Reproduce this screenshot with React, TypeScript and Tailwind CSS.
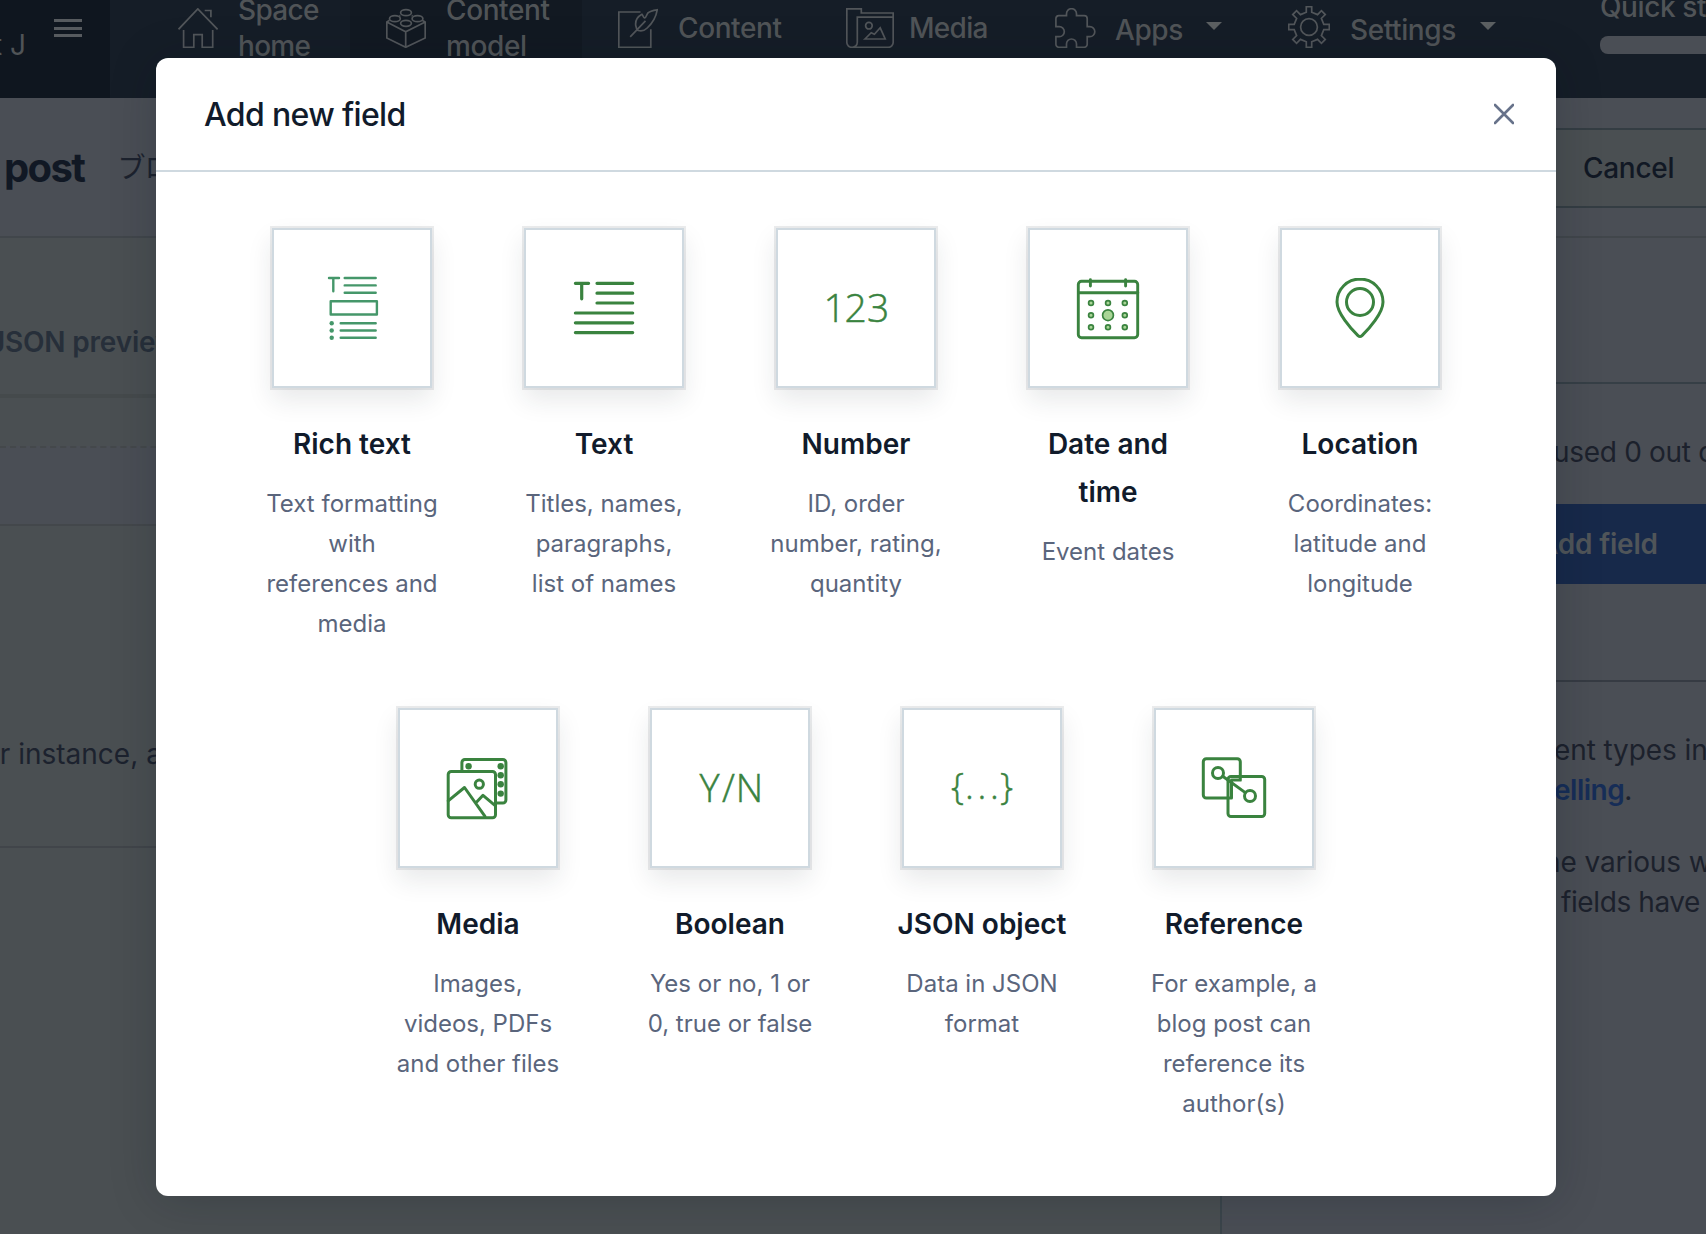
import type { ReactNode } from "react";

const GREEN = "#3a833f";

// 8-tooth cog outline, centred in a 42x42 box
const gearPath = (() => {
  const pt = (x: number, y: number, a: number) =>
    `${(21 + x * Math.cos(a) - y * Math.sin(a)).toFixed(2)} ${(21 + x * Math.sin(a) + y * Math.cos(a)).toFixed(2)}`;
  const parts: string[] = [];
  for (let i = 0; i < 8; i++) {
    const a = (i * Math.PI) / 4;
    parts.push(pt(-2.7, -14.8, a), pt(-2.7, -20.3, a), pt(2.7, -20.3, a), pt(2.7, -14.8, a));
  }
  return `M${parts.join("L")}Z`;
})();

const NavSvg = ({ w = 40, h = 40, children }: { w?: number; h?: number; children: ReactNode }) => (
  <svg width={w} height={h} viewBox={`0 0 ${w} ${h}`} fill="none" stroke="#52565a" strokeWidth={1.7} className="shrink-0">
    {children}
  </svg>
);

const HomeIcon = () => (
  <NavSvg>
    <path d="M.5 21.3 19.8.9 39.6 21.3M26.7 2.5h6.2v6.8M5.6 22v17.3h10.2V26.7h8.4v12.6h10.5V22" />
  </NavSvg>
);

const ModelIcon = () => (
  <NavSvg>
    <ellipse cx="20" cy="4.7" rx="5.4" ry="3" />
    <ellipse cx="8.9" cy="10.7" rx="5.4" ry="3" />
    <ellipse cx="31.5" cy="10.7" rx="5.4" ry="3" />
    <ellipse cx="20" cy="15.3" rx="5.4" ry="3" />
    <path d="M3.5 12.3.8 14v16l18.9 9.3L39.2 30V14l-3-1.7M.8 14l18.9 9.7L39.2 14M19.7 23.7v15.6M14.3 7.5l-.8.5M25.7 7.5l.8.5" />
  </NavSvg>
);

const ContentIcon = () => (
  <NavSvg>
    <path d="M22.5 4H.8v35.3h32V21.3" />
    <path d="M39.2 1.8c-4.5.6-8 1.8-9.5 3.4-1.2 1.5-1.3 4.3-3 4.6-1.7.3-1.3-2.3-2.7-3.5-4.6 2.5-6.8 6.5-6.3 11 .3 2.5 1 4 2.5 5.2 3 .8 6.3.3 9-2.5C34.5 15 38 9.5 39.2 1.8ZM12.2 28.8 27.5 12.8" />
  </NavSvg>
);

const MediaNavIcon = () => (
  <NavSvg w={48}>
    <path d="M47.2 9.2V5H15.3V.8H.8v33.5a5 5 0 0 0 5 5h36.4a5 5 0 0 0 5-5V9.2H11.3v25.1a5 5 0 0 1-5.2 5" />
    <circle cx="22.9" cy="17.7" r="3.3" />
    <path d="m18.9 31 6.3-6.3 3.2 1.6 5.8-6.5L39.2 31Z" />
  </NavSvg>
);

const AppsIcon = () => (
  <NavSvg w={41}>
    <path d="M.9 18.7v-8a3 3 0 0 1 3-3h7.6v-2a5 5 0 0 1 10 0v2h7.7a3 3 0 0 1 3 3v8h2.6a5 5 0 0 1 0 10h-2.6v7.6a3 3 0 0 1-3 3h-7.7V36a5 5 0 0 0-10 0v3.3H3.9a3 3 0 0 1-3-3v-7.6h3.4a5 5 0 0 0 0-10Z" />
  </NavSvg>
);

const GearIcon = () => (
  <NavSvg w={42} h={42}>
    <path d={gearPath} />
    <circle cx="21" cy="21" r="8.4" />
  </NavSvg>
);

const Caret = ({ className }: { className: string }) => (
  <svg width="16" height="8" viewBox="0 0 16 8" fill="#5c6062" className={className}>
    <path d="M0 0h16L8 8Z" />
  </svg>
);

const FieldSvg = ({ color = GREEN, stroke = 3, children }: { color?: string; stroke?: number; children: ReactNode }) => (
  <svg width="64" height="64" viewBox="0 0 64 64" fill="none" stroke={color} strokeWidth={stroke} strokeLinecap="round" strokeLinejoin="round" className="overflow-visible">
    {children}
  </svg>
);

const RichTextIcon = () => (
  <FieldSvg color="#45976a" stroke={2.4}>
    <path d="M9 2h10M13.3 2v13.3M24.7 2h31M24.7 9.4h31M24.7 16.7h31M20.7 47.2h35M20.7 54.5h35M20.7 61.7h35" />
    <path d="M10.7 25.3h46.2v13.2H10.7Z" />
    <g fill="#45976a" stroke="none">
      <circle cx="11.7" cy="47.2" r="2.2" />
      <circle cx="11.7" cy="54.5" r="2.2" />
      <circle cx="11.7" cy="61.7" r="2.2" />
    </g>
  </FieldSvg>
);

const TextIcon = () => (
  <FieldSvg stroke={3.2}>
    <path d="M3.4 7.3h13.2M9.7 7.3v15.5M25 7.3h35.7M25 17.2h35.7M25 27h35.7M3.4 37h57.3M3.4 46.8h57.3M3.4 56.6h57.3" />
  </FieldSvg>
);

// x takes one value, or one per character
const GlyphIcon = ({ label, x, y, size }: { label: string; x: string; y: number; size: number }) => (
  <svg width="64" height="64" viewBox="0 0 64 64" className="overflow-visible font-['Open_Sans',sans-serif] font-light">
    <text x={x} y={y} fontSize={size} fill={GREEN} stroke={GREEN} strokeWidth="0.5">
      {label}
    </text>
  </svg>
);

const CalendarIcon = () => (
  <FieldSvg stroke={2.9}>
    <rect x="2.3" y="5.3" width="59.4" height="56.4" rx="3.2" />
    <path d="M2.4 16.8h59.4M14.4 3.7v6.4M49.6 3.7v6.4" />
    <g fill="#a9d596" strokeWidth="1.7">
      {[15, 32, 48.8].map((x) =>
        [27, 39.2, 51.3].map((y) => <circle key={`${x}-${y}`} cx={x} cy={y} r={x === 32 && y === 39.2 ? 5.4 : 2.4} />)
      )}
    </g>
  </FieldSvg>
);

const LocationIcon = () => (
  <FieldSvg>
    <path d="M32 3C19.3 3 9 13.2 9 26c0 11 14 27 21 33.6q2 1.8 4 0C41 53 55 37 55 26 55 13.2 44.7 3 32 3Z" />
    <circle cx="32" cy="26" r="13.5" />
  </FieldSvg>
);

const MediaIcon = () => (
  <FieldSvg>
    <path d="M15.9 15.5V6.5a3 3 0 0 1 3-3h38a3 3 0 0 1 3 3V44.1a3 3 0 0 1-3 3H49.5" />
    <rect x="2.2" y="15.5" width="47.3" height="46.3" rx="3" />
    <path d="M2.2 44.8 18.5 31.5 39 60.3M30.2 46.5l6.8-7.2L49.5 49.8" />
    <circle cx="33.3" cy="28.2" r="4.1" />
    <g fill={GREEN} stroke="none">
      <circle cx="22.6" cy="10.3" r="3.2" />
      <circle cx="54.7" cy="10.3" r="3.2" />
      <circle cx="54.7" cy="19.3" r="3.2" />
      <circle cx="54.7" cy="28.3" r="3.2" />
      <circle cx="54.7" cy="37.6" r="3.2" />
    </g>
  </FieldSvg>
);

const ReferenceIcon = () => (
  <FieldSvg>
    <path strokeLinecap="butt" d="M38.3 24.7V5.7a3 3 0 0 0-3-3h-31a3 3 0 0 0-3 3V39a3 3 0 0 0 3 3H29.5V24h10" />
    <rect x="26" y="20.5" width="36.7" height="40" rx="3" />
    <circle cx="16" cy="17" r="5.5" />
    <circle cx="48" cy="40" r="5.5" />
    <path d="m20.7 20.3 22.6 16.3" />
  </FieldSvg>
);

const fields = [
  { title: "Rich text", body: "Text formatting\nwith\nreferences and\nmedia", icon: <RichTextIcon /> },
  { title: "Text", body: "Titles, names,\nparagraphs,\nlist of names", icon: <TextIcon /> },
  { title: "Number", body: "ID, order\nnumber, rating,\nquantity", icon: <GlyphIcon label="123" x="-0.5 20.5 43" y={46} size={39} /> },
  { title: "Date and\ntime", body: "Event dates", icon: <CalendarIcon /> },
  { title: "Location", body: "Coordinates:\nlatitude and\nlongitude", icon: <LocationIcon /> },
  { title: "Media", body: "Images,\nvideos, PDFs\nand other files", icon: <MediaIcon /> },
  { title: "Boolean", body: "Yes or no, 1 or\n0, true or false", icon: <GlyphIcon label="Y/N" x="1.5 24 37.8" y={45.7} size={38} /> },
  { title: "JSON object", body: "Data in JSON\nformat", icon: <GlyphIcon label="{...}" x="1 15 27.5 40 50" y={42.5} size={37} /> },
  { title: "Reference", body: "For example, a\nblog post can\nreference its\nauthor(s)", icon: <ReferenceIcon /> },
];

const TopNav = () => (
  <nav className="flex h-[98px] shrink-0 items-start bg-[#151d27] text-[28px] leading-9 font-medium tracking-[-0.4px] text-[#505457]">
    <div className="flex h-full w-[110px] shrink-0 bg-[#0f161f]">
      <span className="-ml-[7px] w-[61px] pt-[27px] font-normal tracking-normal whitespace-nowrap">t J</span>
      <div className="flex flex-col gap-[4.5px] pt-[19px]">
        <div className="h-[3px] w-7 bg-[#575b5f]" />
        <div className="h-[3px] w-7 bg-[#575b5f]" />
        <div className="h-[3px] w-7 bg-[#575b5f]" />
      </div>
    </div>
    <div className="flex w-[240px] shrink-0 pl-[68px]">
      <div className="pt-2"><HomeIcon /></div>
      <span className="-mt-2 ml-5 tracking-[-0.7px]">Space<br />home</span>
    </div>
    <div className="flex h-full w-[232px] shrink-0 bg-[#121922] pl-9">
      <div className="pt-2"><ModelIcon /></div>
      <span className="-mt-2 ml-5">Content<br />model</span>
    </div>
    <div className="flex w-[228px] shrink-0 pl-9">
      <div className="pt-2"><ContentIcon /></div>
      <span className="mt-[10px] ml-5">Content</span>
    </div>
    <div className="flex w-[210px] shrink-0 pl-9">
      <div className="pt-2"><MediaNavIcon /></div>
      <span className="mt-[10px] ml-[15px] tracking-[-0.7px]">Media</span>
    </div>
    <div className="flex w-[232px] shrink-0 pl-[35px]">
      <div className="pt-2"><AppsIcon /></div>
      <span className="mt-3 ml-[19px] w-[91px]">Apps</span>
      <Caret className="mt-[22px]" />
    </div>
    <div className="flex w-[312px] shrink-0 pl-9">
      <div className="pt-[6px]"><GearIcon /></div>
      <span className="mt-3 ml-5 w-[130px]">Settings</span>
      <Caret className="mt-[22px]" />
    </div>
    <div className="h-full grow pl-9">
      <div className="-mt-[11px] whitespace-nowrap">Quick st</div>
      <div className="mt-[11px] h-[18px] w-[140px] rounded-lg bg-[#4a4e55]" />
    </div>
  </nav>
);

const PageHeader = () => (
  <header className="flex h-[140px] shrink-0 items-start border-b-2 border-[#41464b] bg-[#4a4e55]">
    <h1 className="mt-[46px] ml-1 text-[40px] leading-[48px] font-bold tracking-[-1.6px] text-[#111824]">post</h1>
    <span className="mt-[50px] ml-[33px] w-[120px] overflow-hidden text-[28px] leading-10 font-normal tracking-[-1px] whitespace-nowrap text-[#1c222e]">ブロ</span>
    <button className="mt-[30px] ml-auto h-20 w-[190px] border-y-2 border-[#343d43] bg-[#4a4f52] pl-[67px] text-left text-[28px] font-medium tracking-[-0.3px] text-[#111824]">
      Cancel
    </button>
  </header>
);

const Editor = () => (
  <section className="w-[1220px] shrink-0 bg-[#4a4f52]">
    <div className="h-40 overflow-hidden border-b-4 border-[#454a4c] pt-[86px]">
      <div className="-ml-[11px] text-[28px] leading-9 font-semibold tracking-[-0.2px] whitespace-nowrap text-[#272f3a]">JSON preview</div>
    </div>
    <div className="h-[48px]" />
    <div className="h-20 border-t-2 border-b-2 border-t-[#44484b] border-b-[#43474b] bg-[#4a4e55] [border-top-style:dashed]" />
    <div className="h-[322px] border-b-2 border-[#41454a] pt-[208px]">
      <p className="-ml-[17px] text-[28px] leading-10 text-[#1c222e]">or instance, a</p>
    </div>
  </section>
);

const Sidebar = () => (
  <aside className="grow overflow-hidden border-l-2 border-[#3b454b] bg-[#4a4e55] text-[28px] leading-10 tracking-[-0.1px] whitespace-nowrap text-[#1c212c]">
    <div className="h-[146px] border-b-2 border-[#363f46]" />
    <div className="h-[298px] border-b-2 border-[#363b43] pt-[48px]">
      <p className="pl-[331px] tracking-[-0.3px]">used 0 out o</p>
      <button className="mt-8 h-20 w-full bg-[#17294a] pl-[316px] text-left font-semibold tracking-[-0.2px] text-[#505559]">Add field</button>
    </div>
    <div className="pt-12 pl-[332px]">
      <p>ent types in</p>
      <p className="tracking-[-0.5px]"><b className="font-semibold text-[#162d57]">elling</b>.</p>
      <p className="mt-8 -ml-[10px]">he various w</p>
      <p className="pl-[7px] tracking-[-0.4px]">fields have</p>
    </div>
  </aside>
);

const AddFieldDialog = () => (
  <div role="dialog" className="flex h-[1138px] w-[1400px] flex-col rounded-xl bg-white shadow-[0_4px_48px_rgba(12,20,28,0.2)]">
    <div className="flex h-[114px] items-center justify-between border-b-2 border-[#cfd9e0] pr-[42px] pl-12">
      <h2 className="pt-[2px] text-[32px] leading-10 font-medium tracking-[-0.65px] text-[#111b2b]">Add new field</h2>
      <svg width="20" height="22" viewBox="0 0 20 22" stroke="#67728a" strokeWidth="2.6" strokeLinecap="round">
        <path d="M1 2 19 20M19 2 1 20" />
      </svg>
    </div>
    <div className="flex flex-wrap justify-center px-[70px] pt-[56px]">
      {fields.map((f) => (
        <div key={f.title} className="flex h-[480px] w-[252px] flex-col items-center text-center whitespace-pre-line">
          <div className="flex size-40 items-center justify-center border-2 border-[#cfd9e0] bg-white shadow-[0_0_0_2px_rgba(0,12,20,0.08),0_12px_24px_rgba(25,37,50,0.1)]">
            {f.icon}
          </div>
          <h3 className="mt-8 text-[28px] leading-[48px] font-semibold text-[#111b2b]">{f.title}</h3>
          <p className="mt-4 text-2xl leading-10 text-[#5a657c]">{f.body}</p>
        </div>
      ))}
    </div>
  </div>
);

export default function App() {
  return (
    <div className="relative h-[1234px] w-[1706px] overflow-hidden bg-[#4a4f52] font-[Inter,'Noto_Sans_CJK_JP',sans-serif]">
      <div className="flex h-full flex-col">
        <TopNav />
        <PageHeader />
        <main className="flex grow">
          <Editor />
          <Sidebar />
        </main>
      </div>
      <div className="absolute inset-0 pt-[58px] pl-[156px]">
        <AddFieldDialog />
      </div>
    </div>
  );
}
